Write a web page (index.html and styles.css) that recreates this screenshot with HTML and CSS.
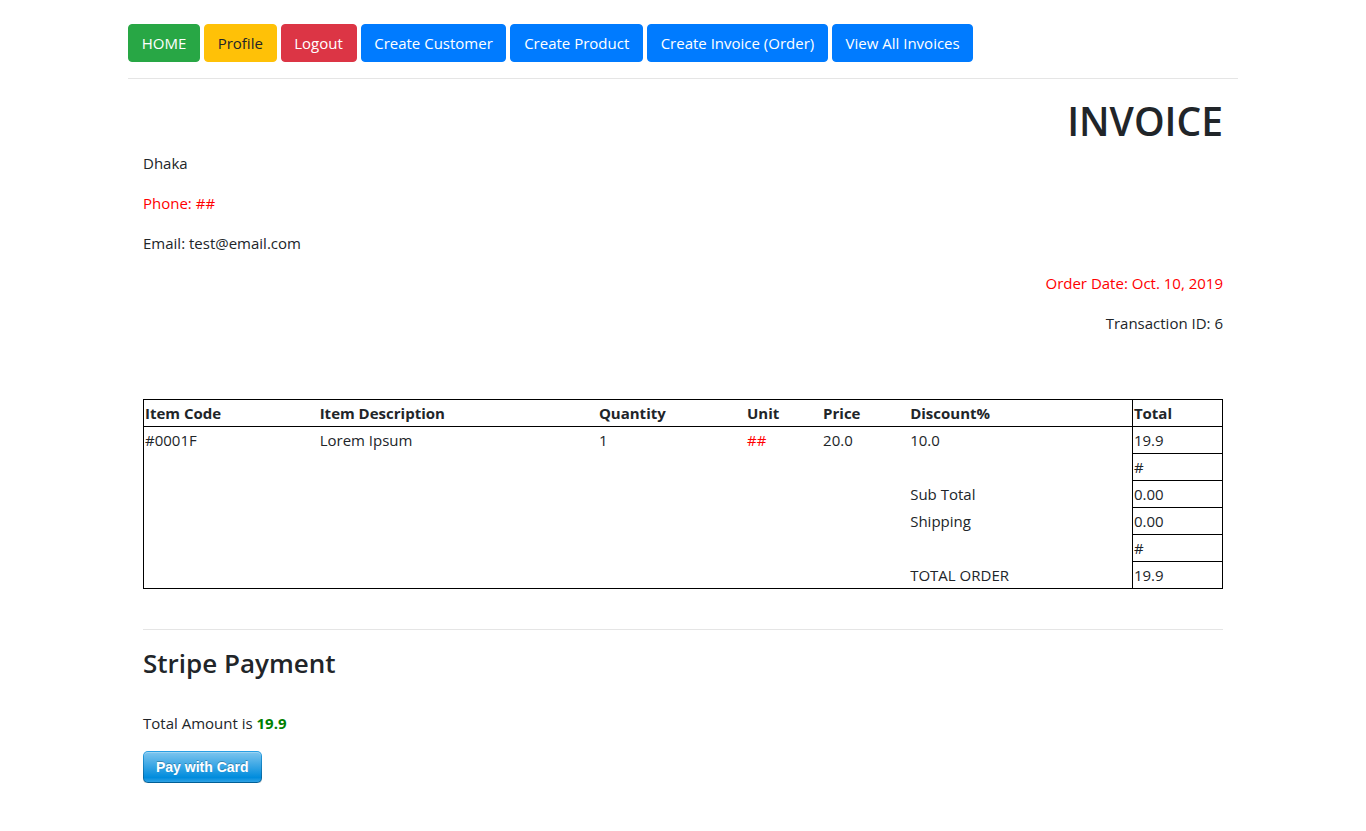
FILE: index.html
```
<!DOCTYPE html>
<html>
<head>
<meta charset="utf-8">
<title>Invoice</title>
<link rel="stylesheet" href="styles.css">
</head>
<body>
<div class="container">
  <nav class="nav">
    <a class="btn btn-success" href="#">HOME</a>
    <a class="btn btn-warning" href="#">Profile</a>
    <a class="btn btn-danger" href="#">Logout</a>
    <a class="btn btn-primary" href="#">Create Customer</a>
    <a class="btn btn-primary" href="#">Create Product</a>
    <a class="btn btn-primary" href="#">Create Invoice (Order)</a>
    <a class="btn btn-primary" href="#">View All Invoices</a>
  </nav>
  <hr class="rule">
  <div class="inner">
    <h1 class="title">INVOICE</h1>
    <p>Dhaka</p>
    <p class="red">Phone: ##</p>
    <p>Email: test@email.com</p>
    <p class="right red">Order Date: Oct. 10, 2019</p>
    <p class="right">Transaction ID: 6</p>

    <table class="items">
      <colgroup>
        <col class="c1"><col class="c2"><col class="c3"><col class="c4"><col class="c5"><col class="c6"><col class="c7">
      </colgroup>
      <thead>
        <tr><th>Item Code</th><th>Item Description</th><th>Quantity</th><th>Unit</th><th>Price</th><th>Discount%</th><th class="tot">Total</th></tr>
      </thead>
      <tbody>
        <tr><td>#0001F</td><td>Lorem Ipsum</td><td>1</td><td class="red">##</td><td>20.0</td><td>10.0</td><td class="tot">19.9</td></tr>
        <tr><td></td><td></td><td></td><td></td><td></td><td></td><td class="tot">#</td></tr>
        <tr><td></td><td></td><td></td><td></td><td></td><td>Sub Total</td><td class="tot">0.00</td></tr>
        <tr><td></td><td></td><td></td><td></td><td></td><td>Shipping</td><td class="tot">0.00</td></tr>
        <tr><td></td><td></td><td></td><td></td><td></td><td></td><td class="tot">#</td></tr>
        <tr><td></td><td></td><td></td><td></td><td></td><td>TOTAL ORDER</td><td class="tot">19.9</td></tr>
      </tbody>
    </table>

    <hr class="rule">
    <h3 class="sub">Stripe Payment</h3>
    <p class="amount">Total Amount is <strong class="green">19.9</strong></p>
    <button class="stripe-btn"><span>Pay with Card</span></button>
  </div>
</div>
</body>
</html>
```
FILE: styles.css
```
* { box-sizing: border-box; }
body {
  margin: 0;
  font-family: "Open Sans", "Noto Sans", sans-serif;
  font-size: 15px;
  line-height: 24px;
  color: #212529;
  background: #fff;
}
.container {
  width: 1140px;
  margin: 0 auto;
  padding: 24px 15px 0;
}
.nav {
  display: flex;
  gap: 4px;
}
.btn {
  display: inline-block;
  padding: 6px 12.7px;
  font-size: 15px;
  line-height: 24px;
  border: 1px solid transparent;
  border-radius: 4px;
  text-decoration: none;
  color: #fff;
}
.btn-success { background: #28a745; border-color: #28a745; }
.btn-warning { background: #ffc107; border-color: #ffc107; color: #212529; }
.btn-danger { background: #dc3545; border-color: #dc3545; }
.btn-primary { background: #007bff; border-color: #007bff; }
.rule {
  margin: 16px 0;
  border: 0;
  border-top: 1px solid rgba(0,0,0,0.1);
}
.inner {
  padding: 0 15px;
}
.title {
  margin: 0 0 8px;
  padding-top: 2px;
  height: 48px;
  font-size: 39px;
  line-height: 48px;
  font-weight: 600;
  text-align: right;
}
p { margin: 0 0 16px; }
.red { color: #ff0000; }
.right { text-align: right; }
.green { color: #008000; font-weight: 700; }
.items {
  margin-top: 64px;
  margin-bottom: 40px;
  width: 100%;
  border-collapse: collapse;
  table-layout: fixed;
  border: 1px solid #000;
}
.c1 { width: 175px; }
.c2 { width: 279px; }
.c3 { width: 148px; }
.c4 { width: 76px; }
.c5 { width: 87px; }
.c6 { width: 223px; }
.c7 { width: 90px; }
.items th, .items td {
  padding: 1px;
  text-align: left;
  vertical-align: top;
  height: 27px;
}
.items th { font-weight: 700; border-bottom: 1px solid #000; }
.items .tot { border: 1px solid #000; }
.sub {
  margin: 0 0 31px;
  font-size: 26px;
  line-height: 34px;
  font-weight: 600;
}
.stripe-btn {
  display: inline-block;
  padding: 1px;
  border: 0;
  border-radius: 5px;
  background: linear-gradient(#28a0e5, #015e94);
  box-shadow: 0 1px 0 rgba(0,0,0,0.2);
  cursor: pointer;
}
.stripe-btn span {
  display: block;
  height: 30px;
  padding: 0 12px;
  line-height: 30px;
  font-family: "Liberation Sans", Arial, sans-serif;
  font-size: 14px;
  font-weight: 700;
  color: #fff;
  border-radius: 4px;
  background: linear-gradient(#7dc5ee, #008cdd 85%, #30a2e4);
  text-shadow: 0 -1px 0 rgba(0,0,0,0.25);
  box-shadow: inset 0 1px 0 rgba(255,255,255,0.25);
}
```
